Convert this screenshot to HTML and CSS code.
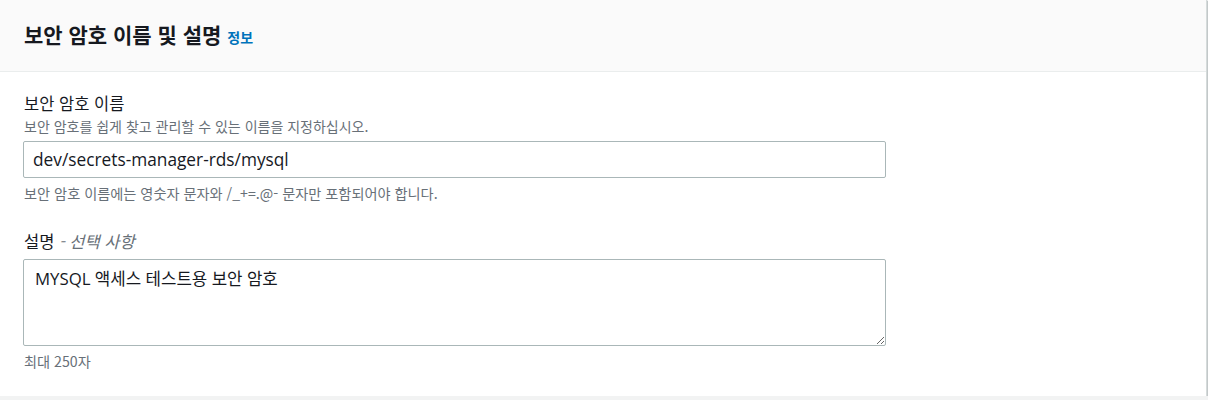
FILE: index.html
```html
<!DOCTYPE html>
<html lang="ko">
<head>
<meta charset="utf-8">
<link rel="stylesheet" href="styles.css">
</head>
<body>
<div class="card">
  <div class="card-header">
    <h2 class="title">보안 암호 이름 및 설명 <a class="info" href="#">정보</a></h2>
  </div>
  <div class="card-body">
    <div class="field">
      <label class="label">보안 암호 이름</label>
      <div class="desc">보안 암호를 쉽게 찾고 관리할 수 있는 이름을 지정하십시오.</div>
      <input class="input" type="text" value="dev/secrets-manager-rds/mysql">
      <div class="hint">보안 암호 이름에는 영숫자 문자와 /_+=.@- 문자만 포함되어야 합니다.</div>
    </div>
    <div class="field field-2">
      <label class="label">설명 <i class="optional">- 선택 사항</i></label>
      <textarea class="textarea">MYSQL 액세스 테스트용 보안 암호</textarea>
      <div class="hint">최대 250자</div>
    </div>
  </div>
</div>
</body>
</html>
```
FILE: styles.css
```css
html, body {
  margin: 0;
  padding: 0;
  background: #f2f3f3;
  font-family: "Open Sans", "Noto Sans CJK KR", sans-serif;
  color: #16191f;
}
.card {
  width: 1206px;
  background: #ffffff;
  border-right: 1px solid #d5dbdb;
  box-shadow: 0 1px 1px 0 rgba(0, 28, 36, 0.3), 1px 1px 1px 0 rgba(0, 28, 36, 0.15);
}
.card-header {
  background: #fafafa;
  border-bottom: 1px solid #eaeded;
  height: 72px;
  box-sizing: border-box;
  display: flex;
  align-items: center;
  padding: 0 24px;
}
.title {
  margin: 0;
  font-size: 21px;
  font-weight: 700;
  line-height: 26px;
  font-family: "Noto Sans CJK KR", sans-serif;
  color: #16191f;
}
.info {
  font-size: 14px;
  font-weight: 700;
  color: #0073bb;
  text-decoration: none;
}
.card-body {
  padding: 20px 24px 26px 23px;
}
.field {
  display: flex;
  flex-direction: column;
}
.field-2 {
  margin-top: 28px;
}
.label {
  font-size: 16.5px;
  line-height: 22px;
  padding-left: 1px;
  font-family: "Noto Sans CJK KR", sans-serif;
  color: #16191f;
}
.optional {
  color: #687078;
  font-style: italic;
}
.desc {
  font-size: 14px;
  line-height: 24px;
  color: #687078;
  padding-left: 1px;
  font-family: "Noto Sans CJK KR", sans-serif;
}
.input {
  margin-top: 3px;
  width: 863px;
  height: 37px;
  box-sizing: border-box;
  border: 1px solid #aab7b8;
  border-radius: 2px;
  padding: 0 9px;
  font-family: "Open Sans", "Noto Sans CJK KR", sans-serif;
  font-size: 17.3px;
  color: #16191f;
  background: #ffffff;
  outline: none;
}
.hint {
  margin-top: 6px;
  font-size: 14.2px;
  line-height: 18px;
  color: #687078;
  padding-left: 1px;
  font-family: "Noto Sans CJK KR", sans-serif;
}
.textarea {
  margin-top: 7px;
  width: 863px;
  height: 87px;
  box-sizing: border-box;
  border: 1px solid #aab7b8;
  border-radius: 2px;
  padding: 8px 11px;
  font-family: "Open Sans", "Noto Sans CJK KR", sans-serif;
  font-size: 16.8px;
  line-height: 22px;
  color: #16191f;
  resize: vertical;
  background: #ffffff;
  outline: none;
}
```
